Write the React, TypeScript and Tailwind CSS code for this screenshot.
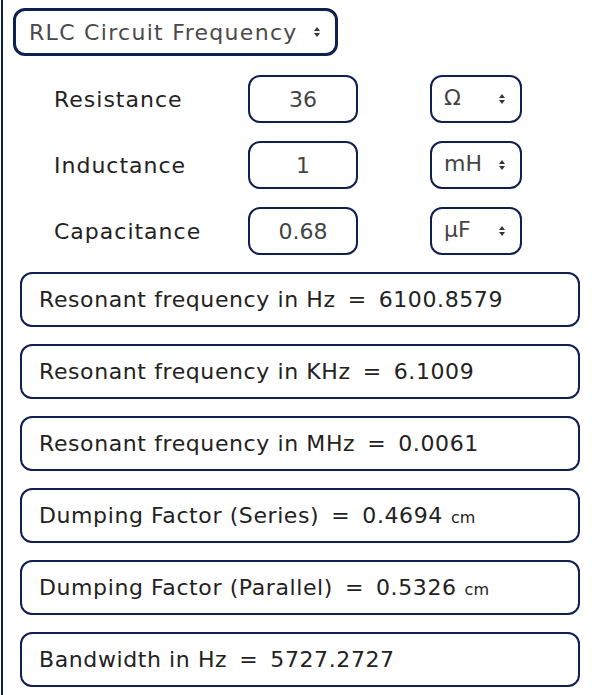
// RLC circuit frequency calculator panel
const font = { fontFamily: '"DejaVu Sans", "Open Sans", sans-serif' };

const Arrows = () => (
  <svg width="8" height="12" viewBox="0 0 8 12" className="shrink-0">
    <path d="M4 1 L7 5 L1 5 Z" fill="#333" />
    <path d="M4 11 L7 7 L1 7 Z" fill="#333" />
  </svg>
);

const inputs = [
  { label: "Resistance", value: "36", unit: "Ω" },
  { label: "Inductance", value: "1", unit: "mH" },
  { label: "Capacitance", value: "0.68", unit: "µF" },
];

const results = [
  { label: "Resonant frequency in Hz", value: "6100.8579", unit: "" },
  { label: "Resonant frequency in KHz", value: "6.1009", unit: "" },
  { label: "Resonant frequency in MHz", value: "0.0061", unit: "" },
  { label: "Dumping Factor (Series)", value: "0.4694", unit: "cm" },
  { label: "Dumping Factor (Parallel)", value: "0.5326", unit: "cm" },
  { label: "Bandwidth in Hz", value: "5727.2727", unit: "" },
];

export default function App() {
  return (
    <div className="w-[592px] h-[695px] bg-white overflow-hidden pl-px" style={font}>
      <div className="h-full border-l-2 border-[#0f1f50] pl-[10px] pt-2">
        {/* calculator picker */}
        <div className="w-[325px] h-[48px] border-[3px] border-[#0f1f50] rounded-[12px] flex items-center pl-[13px] pr-[14px] justify-between">
          <span className="text-[22px] tracking-[1.3px] text-[#4a4a4a]">RLC Circuit Frequency</span>
          <Arrows />
        </div>

        {/* inputs */}
        <div className="mt-[19px] flex flex-col gap-[18px]">
          {inputs.map((r) => (
            <div key={r.label} className="flex items-center h-[48px]">
              <span className="w-[235px] pl-[41px] text-[22px] tracking-[1px] text-[#222]">{r.label}</span>
              <div className="w-[110px] h-[48px] border-2 border-[#0f1f50] rounded-[12px] flex items-center justify-center text-[22px] text-[#444]">
                {r.value}
              </div>
              <div className="ml-[72px] w-[92px] h-[48px] border-2 border-[#0f1f50] rounded-[12px] flex items-center justify-between pl-[12px] pr-[14px] text-[22px] text-[#444]">
                <span className="-mt-[4px]">{r.unit}</span>
                <Arrows />
              </div>
            </div>
          ))}
        </div>

        {/* results */}
        <div className="mt-[17px] flex flex-col gap-[17px] pl-[7px]">
          {results.map((r) => (
            <div key={r.label} className="w-[560px] h-[55px] border-2 border-[#0f1f50] rounded-[12px] flex items-center pl-[17px] text-[22px] tracking-[0.6px] text-[#222] whitespace-pre">
              <span>{r.label}</span>
              <span className="mx-[12px]">=</span>
              <span>{r.value}</span>
              {r.unit && <span className="text-[16px] tracking-normal ml-[8px] mt-[4px]">{r.unit}</span>}
            </div>
          ))}
        </div>
      </div>
    </div>
  );
}
